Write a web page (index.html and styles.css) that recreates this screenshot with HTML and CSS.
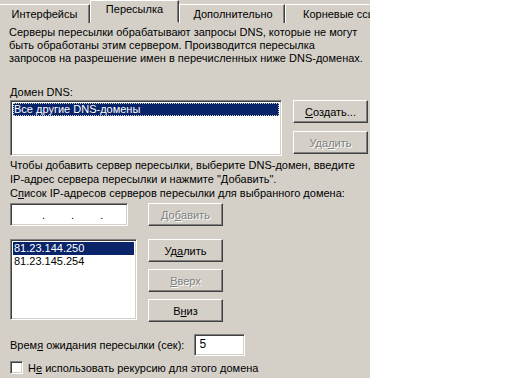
FILE: index.html
```html
<!DOCTYPE html>
<html>
<head>
<meta charset="utf-8">
<link rel="stylesheet" href="styles.css">
</head>
<body>
<div class="dialog">
  <div class="tabs">
    <div class="tab first">Интерфейсы</div>
    <div class="tab selected">Пересылка</div>
    <div class="tab middle">Дополнительно</div>
    <div class="tab last">Корневые ссы</div>
  </div>
  <div class="panel">
    <p class="desc">Серверы пересылки обрабатывают запросы DNS, которые не могут быть обработаны этим сервером. Производится пересылка запросов на разрешение имен в перечисленных ниже DNS-доменах.</p>
    <div class="label dns-label"><u>Д</u>омен DNS:</div>
    <div class="row dns-row">
      <div class="list dns-list">
        <div class="item sel focus">Все другие DNS-домены</div>
      </div>
      <div class="btncol dns-btns">
        <div class="btn"><u>С</u>оздать...</div>
        <div class="btn disabled">Уда<u>л</u>ить</div>
      </div>
    </div>
    <p class="hint">Чтобы добавить сервер пересылки, выберите DNS-домен, введите IP-адрес сервера пересылки и нажмите "Добавить".</p>
    <div class="label list-label">С<u>п</u>исок IP-адресов серверов пересылки для выбранного домена:</div>
    <div class="row ip-row">
      <div class="field ip-field"><span>.</span><span>.</span><span>.</span></div>
      <div class="btn disabled">До<u>б</u>авить</div>
    </div>
    <div class="row ip-list-row">
      <div class="list ip-list">
        <div class="item sel">81.23.144.250</div>
        <div class="item">81.23.145.254</div>
      </div>
      <div class="btncol ip-btns">
        <div class="btn">Уд<u>а</u>лить</div>
        <div class="btn disabled"><u>В</u>верх</div>
        <div class="btn">В<u>н</u>из</div>
      </div>
    </div>
    <div class="row timeout-row">
      <span>Врем<u>я</u> ожидания пересылки (сек):</span>
      <div class="field timeout-field">5</div>
    </div>
    <div class="row check-row">
      <span class="checkbox"></span>
      <span>Н<u>е</u> использовать рекурсию для этого домена</span>
    </div>
  </div>
</div>
</body>
</html>
```

FILE: styles.css
```css
html, body {
  margin: 0;
  padding: 0;
  background: #ffffff;
}
.dialog {
  width: 370px;
  height: 378px;
  background: #d4d0c8;
  font-family: "Liberation Sans", Arial, sans-serif;
  font-size: 11px;
  color: #000;
  overflow: hidden;
}
u { text-decoration: underline; text-underline-offset: 1px; }
.tabs {
  display: flex;
  align-items: flex-end;
  height: 22px;
  border-bottom: 1px solid #ffffff;
  white-space: nowrap;
}
.tab {
  height: 19px;
  box-sizing: border-box;
  padding: 3px 0 0 0;
  text-align: center;
  border-top: 1px solid #ffffff;
  border-left: 1px solid #ffffff;
  border-right: 1px solid #404040;
  box-shadow: inset -1px 0 #808080;
  margin-bottom: -1px;
  background: #d4d0c8;
  overflow: hidden;
}
.tab.first { width: 90px; border-left: none; }
.tab.selected {
  width: 89px;
  height: 23px;
  padding-top: 2px;
  position: relative;
  z-index: 1;
  margin-bottom: -1px;
  border-bottom: 1px solid #d4d0c8;
}
.tab.middle { width: 106px; padding-left: 2px; }
.tab.last { width: 85px; border-right: none; box-shadow: none; text-align: left; padding-left: 17px; }
.panel {
  padding: 3px 0 0 10px;
}
p { margin: 0; }
.desc {
  width: 355px;
  line-height: 13px;
  margin-left: -1px;
}
.label { line-height: 13px; }
.dns-label { margin-top: 21px; }
.row { display: flex; }
.dns-row { margin-top: 1px; }
.list {
  background: #fff;
  box-sizing: border-box;
  border: 1px solid;
  border-color: #808080 #ffffff #ffffff #808080;
  box-shadow: inset 1px 1px #404040, inset -1px -1px #d4d0c8;
  padding: 2px;
}
.dns-list { width: 272px; height: 56px; }
.item {
  height: 13px;
  line-height: 13px;
  padding-left: 1px;
  white-space: nowrap;
}
.item.sel { background: #0a246a; color: #fff; }
.item.focus { outline: 1px dotted #d4d0c8; outline-offset: -1px; }
.btncol { display: flex; flex-direction: column; }
.dns-btns { margin-left: 11px; gap: 8px; }
.btn {
  width: 75px;
  height: 23px;
  box-sizing: border-box;
  border: 1px solid;
  border-color: #ffffff #404040 #404040 #ffffff;
  box-shadow: inset -1px -1px #808080;
  display: flex;
  align-items: center;
  justify-content: center;
  background: #d4d0c8;
}
.btn.disabled { color: #808080; text-shadow: 1px 1px #ffffff; }
.hint { line-height: 14px; margin-top: 2px; width: 360px; }
.list-label { margin-top: 1px; }
.ip-row { margin-top: 3px; gap: 20px; }
.field {
  background: #fff;
  box-sizing: border-box;
  border: 1px solid;
  border-color: #808080 #ffffff #ffffff #808080;
  box-shadow: inset 1px 1px #404040, inset -1px -1px #d4d0c8;
}
.ip-field {
  width: 118px;
  height: 23px;
  display: flex;
  align-items: center;
  padding-left: 31px;
  gap: 26px;
  color: #000;
  line-height: 10px;
}
.ip-list-row { margin-top: 13px; gap: 11px; }
.ip-list { width: 127px; height: 81px; }
.ip-btns { gap: 7px; }
.timeout-row { margin-top: 12px; align-items: center; gap: 10px; }
.timeout-field {
  width: 51px;
  height: 22px;
  padding: 2px 0 0 4px;
  line-height: 14px;
  font-size: 12px;
}
.check-row { margin-top: 5px; align-items: center; gap: 5px; }
.checkbox {
  width: 13px;
  height: 13px;
  box-sizing: border-box;
  background: #fff;
  border: 1px solid;
  border-color: #808080 #ffffff #ffffff #808080;
  box-shadow: inset 1px 1px #404040, inset -1px -1px #d4d0c8;
}
```
